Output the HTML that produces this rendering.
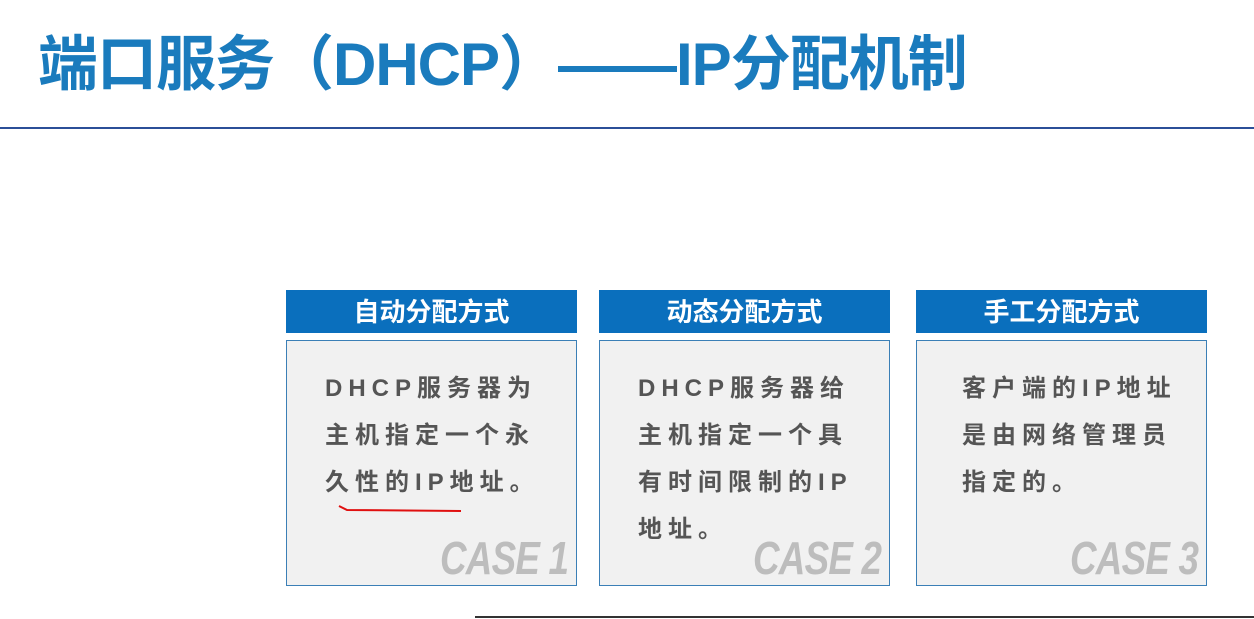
<!DOCTYPE html>
<html><head><meta charset="utf-8"><style>
body{margin:0;width:1254px;height:619px;background:#fff;position:relative;overflow:hidden;font-family:"Liberation Sans","Noto Sans CJK SC",sans-serif}
.title{position:absolute;left:38px;top:16px;font-size:60px;font-weight:bold;color:#1a7bbd;white-space:nowrap;letter-spacing:-1px;transform:scaleX(1.0);transform-origin:left}
.hr{position:absolute;left:0;top:127px;width:1254px;height:2px;background:#2b4f98}
.hd{position:absolute;top:290px;height:43px;background:#0a6fbd;color:#fff;font-size:26px;font-weight:bold;text-align:center;line-height:44px}
.bx{position:absolute;top:340px;height:244px;background:#f1f1f1;border:1.5px solid #3b7fb6;box-sizing:border-box}
.tx{position:absolute;left:38px;top:24px;font-size:24px;font-weight:bold;color:#555;letter-spacing:6px;line-height:47px;white-space:nowrap}
.case{position:absolute;right:8px;bottom:0px;font-size:46px;font-weight:bold;font-style:italic;color:#bdbdbd;transform:scaleX(0.8);transform-origin:right;letter-spacing:-1px}
</style></head><body>
<div class="title">端口服务（DHCP）——IP分配机制</div>
<div class="hr"></div>
<div class="hd" style="left:286px;width:291px">自动分配方式</div>
<div class="hd" style="left:599px;width:291px">动态分配方式</div>
<div class="hd" style="left:916px;width:291px">手工分配方式</div>
<div class="bx" style="left:286px;width:291px;height:246px"><div class="tx">DHCP服务器为<br>主机指定一个永<br>久性的IP地址。</div>
<svg style="position:absolute;left:44px;top:160px" width="140" height="16"><path d="M8 5 L16 9 L130 10" stroke="#e01010" stroke-width="2" fill="none"/></svg>
<div class="case">CASE 1</div></div>
<div class="bx" style="left:599px;width:291px;height:246px"><div class="tx">DHCP服务器给<br>主机指定一个具<br>有时间限制的IP<br>地址。</div><div class="case">CASE 2</div></div>
<div class="bx" style="left:916px;width:291px;height:246px"><div class="tx" style="left:45px">客户端的IP地址<br>是由网络管理员<br>指定的。</div><div class="case">CASE 3</div></div>
<div style="position:absolute;left:475px;top:616px;width:779px;height:2px;background:#333"></div>
</body></html>
